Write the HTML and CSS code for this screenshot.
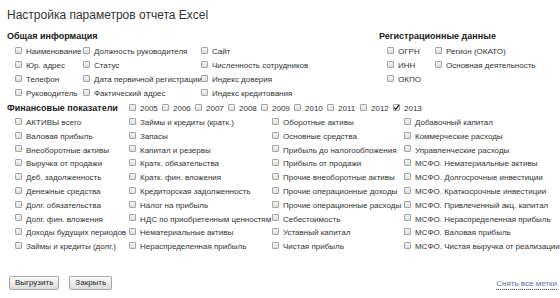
FILE: index.html
```html
<!DOCTYPE html>
<html lang="ru">
<head>
    <meta charset="UTF-8">
    <title>Настройка параметров отчета Excel</title>
    <link rel="stylesheet" href="styles.css">
</head>
<body>
    <div id="dialog">
        <h1>Настройка параметров отчета Excel</h1>

        <div class="top">
            <div class="group general">
                <div class="caption">Общая информация</div>
                <div class="opts general-opts">
                    <label class="opt"><span class="box"></span>Наименование</label>
                    <label class="opt"><span class="box"></span>Должность руководителя</label>
                    <label class="opt"><span class="box"></span>Сайт</label>
                    <label class="opt"><span class="box"></span>Юр. адрес</label>
                    <label class="opt"><span class="box"></span>Статус</label>
                    <label class="opt"><span class="box"></span>Численность сотрудников</label>
                    <label class="opt"><span class="box"></span>Телефон</label>
                    <label class="opt"><span class="box"></span>Дата первичной регистрации</label>
                    <label class="opt"><span class="box"></span>Индекс доверия</label>
                    <label class="opt"><span class="box"></span>Руководитель</label>
                    <label class="opt"><span class="box"></span>Фактический адрес</label>
                    <label class="opt"><span class="box"></span>Индекс кредитования</label>
                </div>
            </div>
            <div class="group reg">
                <div class="caption">Регистрационные данные</div>
                <div class="opts reg-opts">
                    <label class="opt"><span class="box"></span>ОГРН</label>
                    <label class="opt"><span class="box"></span>Регион (ОКАТО)</label>
                    <label class="opt"><span class="box"></span>ИНН</label>
                    <label class="opt"><span class="box"></span>Основная деятельность</label>
                    <label class="opt"><span class="box"></span>ОКПО</label>
                </div>
            </div>
        </div>

        <div class="fin-head">
            <div class="caption">Финансовые показатели</div>
            <div class="years">
                <label class="opt"><span class="box"></span>2005</label>
                <label class="opt"><span class="box"></span>2006</label>
                <label class="opt"><span class="box"></span>2007</label>
                <label class="opt"><span class="box"></span>2008</label>
                <label class="opt"><span class="box"></span>2009</label>
                <label class="opt"><span class="box"></span>2010</label>
                <label class="opt"><span class="box"></span>2011</label>
                <label class="opt"><span class="box"></span>2012</label>
                <label class="opt"><span class="box checked"><svg width="7" height="7" viewBox="0 0 7 7"><polyline points="1.2,3.6 2.8,5.3 5.9,1.2" fill="none" stroke="#222" stroke-width="1.3"/></svg></span>2013</label>
            </div>
        </div>

        <div class="opts fin-opts">
            <label class="opt"><span class="box"></span>АКТИВЫ всего</label>
            <label class="opt"><span class="box"></span>Займы и кредиты (кратк.)</label>
            <label class="opt"><span class="box"></span>Оборотные активы</label>
            <label class="opt"><span class="box"></span>Добавочный капитал</label>

            <label class="opt"><span class="box"></span>Валовая прибыль</label>
            <label class="opt"><span class="box"></span>Запасы</label>
            <label class="opt"><span class="box"></span>Основные средства</label>
            <label class="opt"><span class="box"></span>Коммерческие расходы</label>

            <label class="opt"><span class="box"></span>Внеоборотные активы</label>
            <label class="opt"><span class="box"></span>Капитал и резервы</label>
            <label class="opt"><span class="box"></span>Прибыль до налогообложения</label>
            <label class="opt"><span class="box"></span>Управленческие расходы</label>

            <label class="opt"><span class="box"></span>Выручка от продажи</label>
            <label class="opt"><span class="box"></span>Кратк. обязательства</label>
            <label class="opt"><span class="box"></span>Прибыль от продажи</label>
            <label class="opt"><span class="box"></span>МСФО. Нематериальные активы</label>

            <label class="opt"><span class="box"></span>Деб. задолженность</label>
            <label class="opt"><span class="box"></span>Кратк. фин. вложения</label>
            <label class="opt"><span class="box"></span>Прочие внеоборотные активы</label>
            <label class="opt"><span class="box"></span>МСФО. Долгосрочные инвестиции</label>

            <label class="opt"><span class="box"></span>Денежные средства</label>
            <label class="opt"><span class="box"></span>Кредиторская задолженность</label>
            <label class="opt"><span class="box"></span>Прочие операционные доходы</label>
            <label class="opt"><span class="box"></span>МСФО. Краткосрочные инвестиции</label>

            <label class="opt"><span class="box"></span>Долг. обязательства</label>
            <label class="opt"><span class="box"></span>Налог на прибыль</label>
            <label class="opt"><span class="box"></span>Прочие операционные расходы</label>
            <label class="opt"><span class="box"></span>МСФО. Привлеченный акц. капитал</label>

            <label class="opt"><span class="box"></span>Долг. фин. вложения</label>
            <label class="opt"><span class="box"></span>НДС по приобретенным ценностям</label>
            <label class="opt"><span class="box"></span>Себестоимость</label>
            <label class="opt"><span class="box"></span>МСФО. Нераспределенная прибыль</label>

            <label class="opt"><span class="box"></span>Доходы будущих периодов</label>
            <label class="opt"><span class="box"></span>Нематериальные активы</label>
            <label class="opt"><span class="box"></span>Уставный капитал</label>
            <label class="opt"><span class="box"></span>МСФО. Валовая прибыль</label>

            <label class="opt"><span class="box"></span>Займы и кредиты (долг.)</label>
            <label class="opt"><span class="box"></span>Нераспределенная прибыль</label>
            <label class="opt"><span class="box"></span>Чистая прибыль</label>
            <label class="opt"><span class="box"></span>МСФО. Чистая выручка от реализации</label>
        </div>

        <div class="footer">
            <div class="buttons">
                <button>Выгрузить</button>
                <button>Закрыть</button>
            </div>
            <a class="uncheck" href="#">Снять все метки</a>
        </div>
    </div>
</body>
</html>
```

FILE: styles.css
```css
body {
    margin: 0;
    background: #fff;
    font-family: "Liberation Sans", Arial, sans-serif;
    color: #333;
}

#dialog {
    width: 560px;
    height: 298px;
    box-sizing: border-box;
    padding: 7px 3px 0 7px;
}

h1 {
    margin: 0;
    font-size: 12px;
    line-height: 16px;
    font-weight: normal;
    color: #333;
}

.caption {
    font-size: 9px;
    line-height: 12px;
    font-weight: bold;
    color: #222;
}

.top {
    display: flex;
    margin-top: 7px;
}

.general {
    width: 372px;
}

.opts {
    display: grid;
    padding-left: 8px;
    margin-top: 3px;
}

.general-opts {
    grid-template-columns: 68px 118px auto;
}

.reg-opts {
    grid-template-columns: 48px auto;
}

.opt {
    display: flex;
    align-items: center;
    gap: 4px;
    font-size: 8px;
    line-height: 14px;
    white-space: nowrap;
    color: #333;
}

.box {
    display: inline-block;
    flex: none;
    width: 5px;
    height: 5px;
    border: 1px solid #a4a4a4;
    border-radius: 1px;
    background: linear-gradient(#f4f4f4, #dedede);
    margin-top: -3px;
    position: relative;
}

.box.checked {
    background: linear-gradient(#fafafa, #e8e8e8);
}

.box svg {
    position: absolute;
    left: -1px;
    top: -1px;
}

.fin-head {
    display: flex;
    align-items: center;
    height: 14px;
    margin-top: 1px;
}

.fin-head .caption {
    width: 122px;
    margin-top: -3px;
}

.years {
    display: flex;
}

.years .opt {
    width: 33px;
}

.fin-opts {
    grid-template-columns: 114px 143px 132px auto;
    margin-top: 0;
}

.fin-opts .opt {
    line-height: 13.8px;
}

.footer {
    display: flex;
    justify-content: space-between;
    align-items: center;
    margin-top: 22px;
    padding-left: 2px;
}

.buttons {
    display: flex;
    gap: 10px;
}

button {
    font-family: "Liberation Sans", Arial, sans-serif;
    font-size: 8px;
    height: 14px;
    padding: 0 5px;
    border: 1px solid #a8a8a8;
    border-radius: 2px;
    background: linear-gradient(#fbfbfb, #dcdcdc);
    color: #222;
    cursor: pointer;
}

.uncheck {
    font-size: 8px;
    line-height: 11px;
    color: #5a72a8;
    text-decoration: none;
    border-bottom: 1px dotted #444;
    margin-top: 2px;
}
```
